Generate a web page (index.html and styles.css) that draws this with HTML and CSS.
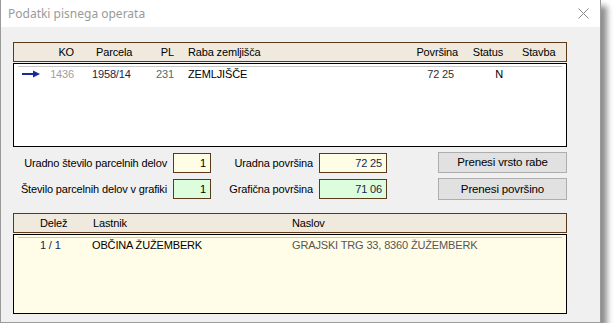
FILE: index.html
```html
<!DOCTYPE html>
<html>
<head>
<meta charset="utf-8">
<link rel="stylesheet" href="styles.css">
</head>
<body>
<div class="win">
  <div class="title">
    <span class="title-text">Podatki pisnega operata</span>
    <svg class="close" width="11" height="11" viewBox="0 0 11 11"><path d="M0.5 0.5 L10.5 10.5 M10.5 0.5 L0.5 10.5" stroke="#8a8a8a" stroke-width="1" fill="none"/></svg>
  </div>
  <div class="content ui">
    <div class="thead cols">
      <span></span>
      <span class="r">KO</span>
      <span class="h-parc">Parcela</span>
      <span class="r">PL</span>
      <span class="h-raba">Raba zemljišča</span>
      <span class="r">Površina</span>
      <span class="r">Status</span>
      <span class="h-stavba">Stavba</span>
    </div>
    <div class="list">
      <div class="rule"></div>
      <div class="row cols">
        <span class="arrow"><svg width="18" height="8" viewBox="0 0 18 8"><path d="M0 4 H12" stroke="#1c2a9c" stroke-width="2"/><path d="M11 0.5 L18 4 L11 7.5 Z" fill="#1c2a9c"/></svg></span>
        <span class="r c-ko">1436</span>
        <span class="d-parc">1958/14</span>
        <span class="r c-pl">231</span>
        <span class="h-raba">ZEMLJIŠČE</span>
        <span class="r d-pov">72 25</span>
        <span class="r">N</span>
        <span></span>
      </div>
    </div>
    <div class="form">
      <span class="lbl">Uradno število parcelnih delov</span>
      <span class="inp yellow">1</span>
      <span class="lbl">Uradna površina</span>
      <span class="inp yellow navy">72 25</span>
      <span></span>
      <span class="btn">Prenesi vrsto rabe</span>
      <span class="lbl">Število parcelnih delov v grafiki</span>
      <span class="inp green">1</span>
      <span class="lbl">Grafična površina</span>
      <span class="inp green navy">71 06</span>
      <span></span>
      <span class="btn tall">Prenesi površino</span>
    </div>
    <div class="thead ocols owner-head">
      <span class="o-del">Delež</span>
      <span class="o-last">Lastnik</span>
      <span>Naslov</span>
    </div>
    <div class="list olist">
      <div class="rule"></div>
      <div class="row ocols">
        <span class="o-del navy">1 / 1</span>
        <span>OBČINA ŽUŽEMBERK</span>
        <span class="addr">GRAJSKI TRG 33, 8360 ŽUŽEMBERK</span>
      </div>
    </div>
  </div>
</div>
</body>
</html>
```
FILE: styles.css
```css
html, body { margin: 0; padding: 0; background: #fff; }
.win {
  width: 601px;
  height: 323px;
  box-sizing: border-box;
  border: 1px solid #9a9a9a;
  border-top: none;
  background: #f0f0f0;
  box-shadow: 6px 6px 6px rgba(0,0,0,0.45);
}
.title {
  height: 27px;
  background: #fff;
  display: flex;
  align-items: center;
  justify-content: space-between;
  padding: 0 11px 0 7px;
}
.title-text {
  font-family: "Noto Sans", "Open Sans", sans-serif;
  font-size: 12px;
  color: #9a9a9a;
}
.close { display: block; }
.ui {
  font-family: "Liberation Sans", Arial, sans-serif;
  font-size: 11px;
  letter-spacing: -0.15px;
  color: #000;
}
.content {
  padding: 15px 33px 0 12px;
  display: flex;
  flex-direction: column;
}
.thead {
  height: 20px;
  box-sizing: border-box;
  border: 1px solid #5a3a1a;
  background: #efeadd;
  align-items: center;
}
.cols {
  display: grid;
  grid-template-columns: 32px 28px 76px 24px 226px 58px 45px 1fr;
}
.r { text-align: right; }
.h-parc { padding-left: 22px; }
.d-parc { padding-left: 18px; color: #1c2450; }
.h-raba { padding-left: 14px; }
.h-stavba { padding-left: 19px; }
.d-pov { padding-right: 4px; color: #303030; }
.c-ko { color: #a0a0a0; }
.c-pl { color: #4c6e6e; }
.list {
  margin-top: 1px;
  height: 84px;
  box-sizing: border-box;
  border: 1px solid #000;
  background: #fff;
}
.rule {
  margin: 2px 4px 0 4px;
  border-top: 1px solid #c8c8c8;
}
.row {
  height: 14px;
  line-height: 14px;
  margin-top: 0;
  align-items: center;
}
.arrow { display: flex; align-items: center; padding-left: 8px; }
.arrow svg { display: block; }
.form {
  margin-top: 5px;
  display: grid;
  grid-template-columns: 154px 38px 96px 68px 1fr 129px;
  column-gap: 6px;
  row-gap: 5px;
  align-items: center;
}
.lbl { text-align: right; white-space: nowrap; }
.inp {
  height: 20px;
  box-sizing: border-box;
  border: 1px solid #5a3a1a;
  text-align: right;
  padding-right: 4px;
  line-height: 18px;
}
.yellow { background: #fffde6; }
.green { background: #dcfedc; }
.navy { color: #1c2450; }
.btn {
  height: 21px;
  box-sizing: border-box;
  border: 1px solid #adadad;
  background: #e1e1e1;
  text-align: center;
  line-height: 19px;
  font-size: 11.5px;
}
.btn.tall { height: 22px; line-height: 20px; }
.owner-head { margin-top: 13px; }
.ocols {
  display: grid;
  grid-template-columns: 78px 200px 1fr;
}
.o-del { padding-left: 26px; }
.o-last { padding-left: 1px; }
.olist { height: 80px; background: #fffde8; }
.addr { color: #555; }
```
